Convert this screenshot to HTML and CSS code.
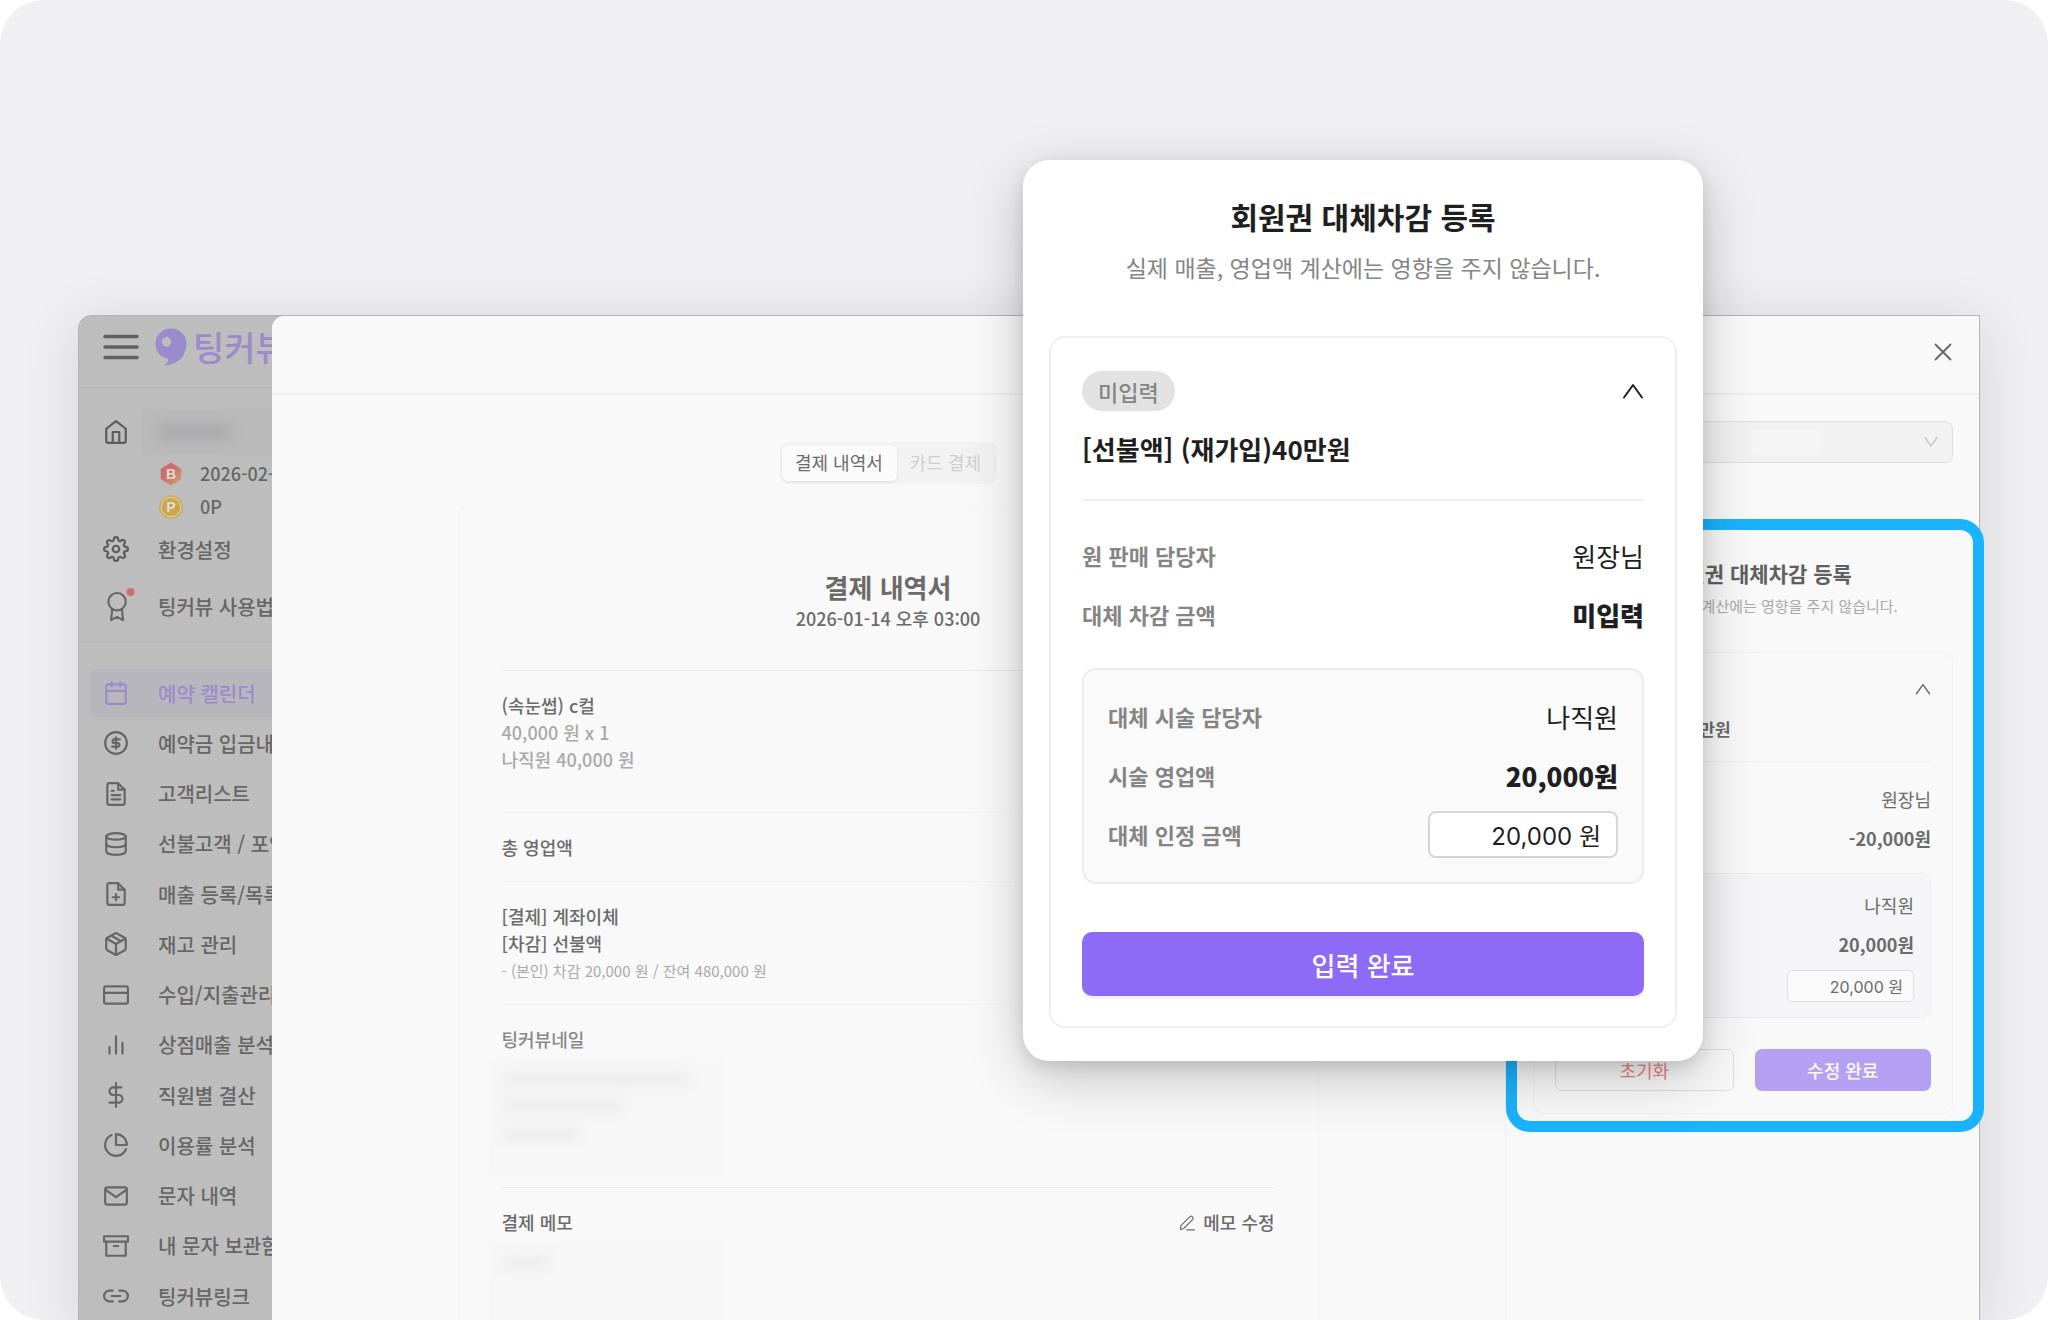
FILE: index.html
```html
<!DOCTYPE html>
<html lang="ko">
<head>
    <meta charset="UTF-8">
    <meta name="viewport" content="width=device-width, initial-scale=1.0">
    <title>팅커뷰 | 회원권 대체차감 등록</title>
    <link rel="stylesheet" href="styles.css">
</head>
<body>
    <div class="stage">
        <div class="window">
            <aside class="sidebar">
                <div class="sidebar-header">
                    <button class="menu-btn" type="button" aria-label="메뉴">
                        <svg width="36" height="26" viewBox="0 0 36 26"><path d="M2 2.500h32M2 13h32M2 23.500h32"/></svg>
                    </button>
                    <a class="logo" href="#">
                        <svg width="32" height="38" viewBox="0 0 32 38">
                            <path fill="#9a8bca" d="M16 0.500C7.200 .5 .5 7.300 .5 15.800c0 8 5.500 14 12.500 15 .8 2.800-.8 5-4.200 6.700C21 37.500 31.500 29 31.500 15.800 31.500 7.300 24.800.5 16 .5z"/>
                            <path fill="#bdbdbd" d="M13 8c-.2 1 .2 1.500 1.200 2.200a4.700 4.700 0 1 1-5.400-.1C10 9.500 11.500 9.300 13 8z"/>
                        </svg>
                        <span>팅커뷰</span>
                    </a>
                </div>

                <div class="profile">
                    <a class="side-item shop" href="#">
                        <svg class="icon" viewBox="0 0 24 24"><path d="M3 9l9-7 9 7v11a2 2 0 0 1-2 2H5a2 2 0 0 1-2-2z"/><path d="M9 22V12h6v10"/></svg>
                        <span class="masked-name"><i></i></span>
                    </a>
                    <div class="info-line">
                        <svg width="24" height="26" viewBox="0 0 24 26">
                            <defs><linearGradient id="hex" x1="0" y1="0" x2="1" y2="1"><stop offset="0.4" stop-color="#c9706e"/><stop offset="1" stop-color="#cba078"/></linearGradient></defs>
                            <path fill="url(#hex)" d="M12 1.500 21.500 7.200c.5.300.8.700.8 1.300v9c0 .600-.3 1-.8 1.300L12 24.500 2.500 18.800c-.5-.3-.8-.7-.8-1.300v-9c0-.6.3-1 .8-1.300z"/>
                            <text class="badge-letter" x="12" y="17.500">B</text>
                        </svg>
                        <span>2026-02-09</span>
                    </div>
                    <div class="info-line">
                        <svg width="24" height="26" viewBox="0 0 24 26">
                            <circle cx="12" cy="13" r="12" fill="#cfae5c"/>
                            <circle cx="12" cy="13" r="9.700" fill="#c8a550" stroke="#dccb9c" stroke-width="1.200"/>
                            <text class="badge-letter" x="12" y="17.500">P</text>
                        </svg>
                        <span>0P</span>
                    </div>
                    <a class="side-item setting" href="#">
                        <svg class="icon" viewBox="0 0 24 24"><circle cx="12" cy="12" r="3"/><path d="M19.400 15a1.650 1.650 0 0 0 .33 1.820l.06.06a2 2 0 0 1 0 2.830 2 2 0 0 1-2.830 0l-.06-.06a1.650 1.650 0 0 0-1.820-.33 1.650 1.650 0 0 0-1 1.510V21a2 2 0 0 1-2 2 2 2 0 0 1-2-2v-.09A1.650 1.650 0 0 0 9 19.400a1.650 1.650 0 0 0-1.820.33l-.06.06a2 2 0 0 1-2.830 0 2 2 0 0 1 0-2.830l.06-.06a1.650 1.650 0 0 0 .33-1.820 1.650 1.650 0 0 0-1.510-1H3a2 2 0 0 1-2-2 2 2 0 0 1 2-2h.09A1.650 1.650 0 0 0 4.600 9a1.650 1.650 0 0 0-.33-1.820l-.06-.06a2 2 0 0 1 0-2.830 2 2 0 0 1 2.830 0l.06.06a1.650 1.650 0 0 0 1.820.33H9a1.650 1.650 0 0 0 1-1.510V3a2 2 0 0 1 2-2 2 2 0 0 1 2 2v.09a1.650 1.650 0 0 0 1 1.510 1.650 1.650 0 0 0 1.820-.33l.06-.06a2 2 0 0 1 2.830 0 2 2 0 0 1 0 2.830l-.06.06a1.650 1.650 0 0 0-.33 1.820V9a1.650 1.650 0 0 0 1.510 1H21a2 2 0 0 1 2 2 2 2 0 0 1-2 2h-.09a1.650 1.650 0 0 0-1.510 1z"/></svg>
                        <span>환경설정</span>
                    </a>
                    <a class="side-item guide" href="#">
                        <svg class="icon" viewBox="0 0 24 24"><circle cx="13" cy="8" r="8"/><path d="M8.500 15 7.500 25l5.500-3 5.500 3-1-10"/><circle class="dot" cx="25.500" cy="-1" r="3.700"/></svg>
                        <span>팅커뷰 사용법</span>
                    </a>
                </div>

                <nav class="side-nav">
                    <a class="side-item active" href="#">
                        <svg class="icon" viewBox="0 0 24 24"><rect x="3" y="4" width="18" height="18" rx="2"/><path d="M16 2v4M8 2v4M3 10h18"/></svg>
                        <span>예약 캘린더</span>
                    </a>
                    <a class="side-item" href="#">
                        <svg class="icon" viewBox="0 0 24 24"><circle cx="12" cy="12" r="10"/><path d="M15.500 8.700h-5a1.650 1.650 0 0 0 0 3.300h3a1.650 1.650 0 0 1 0 3.300H8.500M12 6.700v10.600"/></svg>
                        <span>예약금 입금내역</span>
                    </a>
                    <a class="side-item" href="#">
                        <svg class="icon" viewBox="0 0 24 24"><path d="M14 2H6a2 2 0 0 0-2 2v16a2 2 0 0 0 2 2h12a2 2 0 0 0 2-2V8z"/><path d="M14 2v6h6M16 13H8M16 17H8M10 9H8"/></svg>
                        <span>고객리스트</span>
                    </a>
                    <a class="side-item" href="#">
                        <svg class="icon" viewBox="0 0 24 24"><ellipse cx="12" cy="5" rx="9" ry="3"/><path d="M21 12c0 1.660-4 3-9 3s-9-1.340-9-3"/><path d="M3 5v14c0 1.660 4 3 9 3s9-1.340 9-3V5"/></svg>
                        <span>선불고객 / 포인트</span>
                    </a>
                    <a class="side-item" href="#">
                        <svg class="icon" viewBox="0 0 24 24"><path d="M14 2H6a2 2 0 0 0-2 2v16a2 2 0 0 0 2 2h12a2 2 0 0 0 2-2V8z"/><path d="M14 2v6h6M12 18v-6M9 15h6"/></svg>
                        <span>매출 등록/목록</span>
                    </a>
                    <a class="side-item" href="#">
                        <svg class="icon" viewBox="0 0 24 24"><path d="M16.500 9.400l-9-5.190M21 16V8a2 2 0 0 0-1-1.730l-7-4a2 2 0 0 0-2 0l-7 4A2 2 0 0 0 3 8v8a2 2 0 0 0 1 1.730l7 4a2 2 0 0 0 2 0l7-4A2 2 0 0 0 21 16z"/><path d="M3.270 6.960 12 12.010l8.730-5.050M12 22.080V12"/></svg>
                        <span>재고 관리</span>
                    </a>
                    <a class="side-item" href="#">
                        <svg class="icon" viewBox="0 0 24 24"><rect x="1" y="4" width="22" height="16" rx="2"/><path d="M1 10h22"/></svg>
                        <span>수입/지출관리</span>
                    </a>
                    <a class="side-item" href="#">
                        <svg class="icon" viewBox="0 0 24 24"><path d="M18 20V10M12 20V4M6 20v-6"/></svg>
                        <span>상점매출 분석</span>
                    </a>
                    <a class="side-item" href="#">
                        <svg class="icon" viewBox="0 0 24 24"><path d="M12 1v22M17 5H9.500a3.500 3.500 0 0 0 0 7h5a3.500 3.500 0 0 1 0 7H6"/></svg>
                        <span>직원별 결산</span>
                    </a>
                    <a class="side-item" href="#">
                        <svg class="icon" viewBox="0 0 24 24"><path d="M21.210 15.890A10 10 0 1 1 8 2.830"/><path d="M22 12A10 10 0 0 0 12 2v10z"/></svg>
                        <span>이용률 분석</span>
                    </a>
                    <a class="side-item" href="#">
                        <svg class="icon" viewBox="0 0 24 24"><rect x="2" y="4" width="20" height="16" rx="2"/><path d="M22 6l-10 7L2 6"/></svg>
                        <span>문자 내역</span>
                    </a>
                    <a class="side-item" href="#">
                        <svg class="icon" viewBox="0 0 24 24"><path d="M21 8v13H3V8M1 3h22v5H1zM10 12h4"/></svg>
                        <span>내 문자 보관함</span>
                    </a>
                    <a class="side-item" href="#">
                        <svg class="icon" viewBox="0 0 24 24"><path d="M15 7h3a5 5 0 0 1 5 5 5 5 0 0 1-5 5h-3m-6 0H6a5 5 0 0 1-5-5 5 5 0 0 1 5-5h3M8 12h8"/></svg>
                        <span>팅커뷰링크</span>
                    </a>
                </nav>
            </aside>

            <div class="drawer">
                <header class="drawer-header">
                    <button class="close-btn" type="button" aria-label="닫기">
                        <svg width="18" height="18" viewBox="0 0 18 18"><path d="M1.500 1.500l15 15M16.500 1.500l-15 15"/></svg>
                    </button>
                </header>

                <div class="drawer-body">
                    <main class="main">
                        <div class="tabs">
                            <button class="tab selected" type="button">결제 내역서</button>
                            <button class="tab" type="button">카드 결제</button>
                        </div>

                        <article class="receipt">
                            <div class="receipt-head">
                                <h1>결제 내역서</h1>
                                <p>2026-01-14 오후 03:00</p>
                            </div>
                            <section class="block item-block">
                                <p>(속눈썹) c컬</p>
                                <p class="muted">40,000 원 x 1</p>
                                <p class="muted">나직원 40,000 원</p>
                            </section>
                            <section class="block light">
                                <p>총 영업액</p>
                            </section>
                            <section class="block light">
                                <p>[결제] 계좌이체</p>
                                <p>[차감] 선불액</p>
                                <p class="note">- (본인) 차감 20,000 원 / 잔여 480,000 원</p>
                            </section>
                            <section class="block light shop-block">
                                <p class="shop-name">팅커뷰네일</p>
                                <div class="masked">
                                    <i class="long"></i>
                                    <i class="mid"></i>
                                    <i class="short"></i>
                                </div>
                            </section>
                            <section class="block memo-block">
                                <div class="memo-head">
                                    <p>결제 메모</p>
                                    <button class="edit-btn" type="button">
                                        <svg width="16" height="16" viewBox="0 0 16 16"><path d="M1.500 14.500l.4-3.800L11 1.600a1.500 1.500 0 0 1 2.200 0l.5.500a1.500 1.500 0 0 1 0 2.200L4.800 13.500zM7.500 14.800h8"/></svg>
                                        메모 수정
                                    </button>
                                </div>
                                <div class="masked">
                                    <i class="tiny"></i>
                                </div>
                            </section>
                        </article>
                    </main>

                    <aside class="panel">
                        <div class="select-wrap">
                            <select aria-label="담당자 선택">
                                <option></option>
                            </select>
                            <span class="select-mask"></span>
                            <svg width="16" height="12" viewBox="0 0 16 12"><path d="M2 1.500l6 8.500 6-8.500"/></svg>
                        </div>

                        <section class="highlight">
                            <h2>회원권 대체차감 등록</h2>
                            <p class="desc">실제 매출, 영업액 계산에는 영향을 주지 않습니다.</p>
                            <div class="card">
                                <div class="card-top">
                                    <span class="pill">입력</span>
                                    <button class="fold-btn" type="button" aria-label="접기">
                                        <svg viewBox="0 0 22 16"><path d="M2 14.500l9-12.500 9 12.500"/></svg>
                                    </button>
                                </div>
                                <h3>[선불액] (재가입)40만원</h3>
                                <div class="rows">
                                    <div class="row"><span>원 판매 담당자</span><span class="value">원장님</span></div>
                                    <div class="row"><span>대체 차감 금액</span><strong>-20,000원</strong></div>
                                </div>
                                <div class="rows inner">
                                    <div class="row"><span>대체 시술 담당자</span><span class="value">나직원</span></div>
                                    <div class="row"><span>시술 영업액</span><strong>20,000원</strong></div>
                                    <div class="row"><label for="panelAmount">대체 인정 금액</label><input id="panelAmount" type="text" value="20,000 원"></div>
                                </div>
                                <div class="actions">
                                    <button class="reset-btn" type="button">초기화</button>
                                    <button class="submit-btn" type="button">수정 완료</button>
                                </div>
                            </div>
                        </section>
                    </aside>
                </div>
            </div>
        </div>

        <div class="popup" role="dialog" aria-labelledby="popupTitle">
            <h2 id="popupTitle">회원권 대체차감 등록</h2>
            <p class="desc">실제 매출, 영업액 계산에는 영향을 주지 않습니다.</p>
            <div class="card">
                <div class="card-top">
                    <span class="pill">미입력</span>
                    <button class="fold-btn" type="button" aria-label="접기">
                        <svg viewBox="0 0 22 16"><path d="M2 14.500l9-12.500 9 12.500"/></svg>
                    </button>
                </div>
                <h3>[선불액] (재가입)40만원</h3>
                <div class="rows">
                    <div class="row"><span>원 판매 담당자</span><span class="value">원장님</span></div>
                    <div class="row"><span>대체 차감 금액</span><strong>미입력</strong></div>
                </div>
                <div class="rows inner">
                    <div class="row"><span>대체 시술 담당자</span><span class="value">나직원</span></div>
                    <div class="row"><span>시술 영업액</span><strong>20,000원</strong></div>
                    <div class="row"><label for="popupAmount">대체 인정 금액</label><input id="popupAmount" type="text" value="20,000 원"></div>
                </div>
                <button class="submit-btn" type="button">입력 완료</button>
            </div>
        </div>
    </div>
</body>
</html>
```
FILE: styles.css
```css
* {
    margin: 0;
    padding: 0;
    box-sizing: border-box;
}

body {
    background: #fff;
    font-family: "Noto Sans CJK KR", "Noto Sans", sans-serif;
    font-size: 18px;
    line-height: 27px;
    color: #6b6b6b;
}

button,
input,
select {
    font: inherit;
    color: inherit;
}

button {
    background: none;
    border: none;
    cursor: pointer;
}

a {
    color: inherit;
    text-decoration: none;
}

svg {
    display: block;
    flex: none;
    fill: none;
    stroke-linecap: round;
    stroke-linejoin: round;
}

.stage {
    position: relative;
    display: flex;
    min-height: 100vh;
    padding: 315px 68px 0 78px;
    background: #f0f0f3;
    border-radius: 44px;
    overflow: hidden;
}

.window {
    flex: 1;
    display: flex;
    background: #bdbdbd;
    border: 1px solid #b4b4b6;
    border-bottom: none;
    border-radius: 14px 0 0 0;
    box-shadow: 0 8px 56px rgba(40, 40, 50, 0.14);
}

/* sidebar */
.sidebar {
    display: flex;
    flex-direction: column;
    width: 193px;
    overflow: hidden;
    white-space: nowrap;
}

.sidebar-header {
    display: flex;
    align-items: center;
    gap: 16px;
    height: 72px;
    padding: 0 0 10px 24px;
    border-bottom: 1px solid #b5b5b5;
}

.menu-btn svg {
    stroke: #606060;
    stroke-width: 3.5;
}

.logo {
    display: flex;
    align-items: center;
    gap: 6px;
    font-size: 34px;
    font-weight: 500;
    line-height: 36px;
    color: #9a8bca;
}

.profile {
    padding: 19px 0 4px;
    border-bottom: 1px solid #b5b5b5;
}

.side-item {
    display: flex;
    align-items: center;
    gap: 29px;
    height: 48px;
    margin-left: 12px;
    padding-left: 12px;
    font-size: 20px;
    font-weight: 500;
    color: #666;
}

.icon {
    width: 26px;
    height: 26px;
    stroke: currentColor;
    stroke-width: 2;
    overflow: visible;
}

.shop {
    height: 50px;
    gap: 13px;
}

.shop .icon,
.setting .icon {
    stroke: #5c5c5c;
}

.masked-name {
    flex: 1;
    height: 46px;
    padding: 16px;
    background: #bababb;
}

.masked-name i {
    display: block;
    width: 74px;
    height: 14px;
    background: #a8a8aa;
    filter: blur(7px);
}

.info-line {
    display: flex;
    align-items: center;
    gap: 17px;
    height: 33px;
    padding-left: 80px;
    font-size: 18px;
    font-weight: 500;
    color: #666;
}

.badge-letter {
    font-family: "Liberation Sans", sans-serif;
    font-size: 14px;
    font-weight: 700;
    text-anchor: middle;
    fill: #e3dccf;
}

.setting {
    height: 52px;
}

.guide {
    height: 62px;
}

.dot {
    fill: #c9706e;
    stroke: none;
}

.side-nav {
    flex: 1;
    display: flex;
    flex-direction: column;
    justify-content: space-between;
    padding-top: 27px;
}

.active {
    background: #b7b6bc;
    color: #9a8bca;
}

/* drawer */
.drawer {
    flex: 1;
    display: flex;
    flex-direction: column;
    background: #f9f9f9;
    border-radius: 12px 0 0 0;
}

.drawer-header {
    display: flex;
    align-items: center;
    justify-content: flex-end;
    height: 79px;
    padding: 0 27px 6px;
    border-bottom: 2px solid #f0f0f0;
}

.close-btn svg {
    stroke: #666;
    stroke-width: 1.8;
}

.drawer-body {
    flex: 1;
    display: flex;
}

.main {
    flex: 1;
    display: flex;
    flex-direction: column;
    align-items: center;
    padding-top: 47px;
}

.tabs {
    display: flex;
    height: 42px;
    padding: 3px 2px;
    background: #f2f2f2;
    border-radius: 8px;
}

.tab {
    padding: 0 14px 1px 13px;
    color: #cfcfcf;
    border-radius: 6px;
}

.selected {
    background: #fbfbfb;
    color: #6b6b6b;
    box-shadow: 0 1px 3px rgba(0, 0, 0, 0.08);
}

.receipt {
    flex: 1;
    width: 100%;
    max-width: 862px;
    margin-top: 22px;
    padding: 61px 43px 0 42px;
    border: 2px solid #f6f6f6;
    border-bottom: none;
    border-radius: 8px 8px 0 0;
    font-weight: 500;
}

.receipt-head {
    padding-bottom: 38px;
    text-align: center;
}

.receipt-head h1 {
    font-size: 26px;
    line-height: 36px;
}

.block {
    padding: 21px 0 20px;
    border-top: 1px solid #eaeaea;
}

.light {
    border-top-color: #f4f4f4;
}

.item-block {
    padding-bottom: 39px;
}

.shop-block {
    padding-bottom: 12px;
}

.memo-block {
    padding-bottom: 0;
}

.muted {
    color: #a9a9a9;
}

.note {
    font-size: 15px;
    font-weight: 400;
    color: #a9a9a9;
}

.shop-name {
    color: #888;
}

.masked {
    display: flex;
    flex-direction: column;
    gap: 14px;
    width: 235px;
    height: 117px;
    margin: 5px 0 0 -13px;
    padding: 15px 13px;
    background: #f7f7f7;
}

.masked i {
    height: 13px;
    background: #ececee;
    filter: blur(6px);
}

.memo-block .masked {
    height: 79px;
}

.long {
    width: 188px;
}

.mid {
    width: 121px;
}

.short {
    width: 78px;
}

.tiny {
    width: 48px;
}

.memo-head {
    display: flex;
    justify-content: space-between;
}

.edit-btn {
    display: flex;
    align-items: center;
    gap: 8px;
}

.edit-btn svg {
    stroke: #6b6b6b;
    stroke-width: 1.2;
}

/* right panel */
.panel {
    width: 474px;
    padding-top: 26px;
    border-left: 1px solid #f0f0f0;
}

.select-wrap {
    position: relative;
    margin: 0 26px 0 27px;
}

.select-wrap select {
    display: block;
    width: 100%;
    height: 42px;
    background: #f2f2f2;
    border: 1px solid #dedede;
    border-radius: 8px;
    appearance: none;
}

.select-mask {
    position: absolute;
    top: 8px;
    right: 133px;
    width: 68px;
    height: 26px;
    background: #f5f5f5;
}

.select-wrap svg {
    position: absolute;
    top: 15px;
    right: 14px;
    stroke: #c9c9c9;
    stroke-width: 1.5;
}

.highlight {
    margin: 56px -5px 0 0;
    padding: 28px 20px 7px 16px;
    background: #f9f9f9;
    border: 11px solid #1ab3fd;
    border-radius: 24px;
}

.highlight h2 {
    padding-left: 32px;
    font-size: 21px;
    font-weight: 700;
    line-height: 30px;
    color: #606060;
    text-align: center;
}

.desc {
    text-align: center;
    white-space: nowrap;
}

.highlight .desc {
    margin-top: 6px;
    font-size: 15px;
    line-height: 24px;
    color: #a9a9a9;
}

.card-top,
.row {
    display: flex;
    align-items: center;
    justify-content: space-between;
}

.highlight .card {
    margin-top: 34px;
    padding: 22px 21px;
    border: 1px solid #f0f0f0;
    border-radius: 10px;
}

.highlight .pill {
    padding: 0 10px;
    font-size: 15px;
    line-height: 28px;
    background: #eee;
    border-radius: 14px;
}

.highlight .fold-btn svg {
    width: 16px;
    height: 12px;
    stroke: #6b6b6b;
    stroke-width: 2;
}

.highlight h3 {
    margin-top: 12px;
    padding-bottom: 19px;
    font-size: 17px;
    font-weight: 700;
    border-bottom: 1px solid #f0f0f0;
}

.highlight .rows {
    display: flex;
    flex-direction: column;
    gap: 12px;
    padding-top: 24px;
}

.highlight .inner {
    margin-top: 21px;
    padding: 18px 16px 15px;
    background: #f5f5f7;
    border: 1px solid #ececec;
    border-radius: 10px;
}

.highlight input {
    width: 127px;
    height: 32px;
    padding: 0 10px;
    font-family: Inter, "Noto Sans CJK KR", sans-serif;
    font-size: 16px;
    text-align: right;
    background: #fafafa;
    border: 1px solid #dedede;
    border-radius: 5px;
}

.actions {
    display: flex;
    gap: 21px;
    margin-top: 31px;
}

.actions button {
    flex: 1;
    height: 42px;
    border-radius: 7px;
}

.reset-btn {
    color: #ea8388;
    border: 1px solid #dedede;
}

.actions .submit-btn {
    font-weight: 500;
    color: #fcfbff;
    background: #b5a1f3;
}

/* popup */
.popup {
    position: absolute;
    top: 160px;
    left: calc(50% - 1px);
    width: 680px;
    padding: 36px 26px 33px;
    background: #fff;
    border-radius: 26px;
    color: #1f1f1f;
    box-shadow: 0 16px 56px rgba(0, 0, 0, 0.22), 0 6px 16px rgba(0, 0, 0, 0.1);
}

.popup h2 {
    font-size: 30px;
    line-height: 40px;
    text-align: center;
}

.popup .desc {
    margin-top: 15px;
    font-size: 23px;
    line-height: 32px;
    color: #858585;
}

.popup .card {
    margin-top: 53px;
    padding: 33px 31px 30px;
    border: 2px solid #f0f0f0;
    border-radius: 16px;
}

.popup .pill {
    padding: 0 16px;
    font-size: 22px;
    font-weight: 500;
    line-height: 40px;
    color: #858585;
    background: #e2e2e2;
    border-radius: 20px;
}

.popup .fold-btn svg {
    width: 22px;
    height: 16px;
    stroke: #1f1f1f;
    stroke-width: 2;
}

.popup h3 {
    margin-top: 20px;
    padding-bottom: 32px;
    font-size: 26px;
    line-height: 36px;
    border-bottom: 2px solid #f0f0f0;
}

.popup .rows {
    padding: 25px 0 24px;
}

.popup .row {
    min-height: 59px;
    font-size: 22px;
    font-weight: 700;
    color: #858585;
}

.popup .value,
.popup strong {
    font-size: 26px;
    color: #1f1f1f;
}

.popup .value {
    font-weight: 400;
}

.popup .inner {
    padding: 17px 24px 18px;
    background: #fafafa;
    border: 2px solid #ececec;
    border-radius: 14px;
}

.popup input {
    width: 190px;
    height: 47px;
    padding: 0 15px;
    font-family: Inter, "Noto Sans CJK KR", sans-serif;
    font-size: 24px;
    font-weight: 400;
    text-align: right;
    color: #1f1f1f;
    background: #fff;
    border: 2px solid #d6d6d6;
    border-radius: 8px;
}

.popup .submit-btn {
    display: block;
    width: 100%;
    height: 64px;
    margin-top: 48px;
    font-size: 26px;
    font-weight: 500;
    color: #fff;
    background: #8e6bf7;
    border-radius: 10px;
    box-shadow: 0 3px 0 #f4effe;
}
```
